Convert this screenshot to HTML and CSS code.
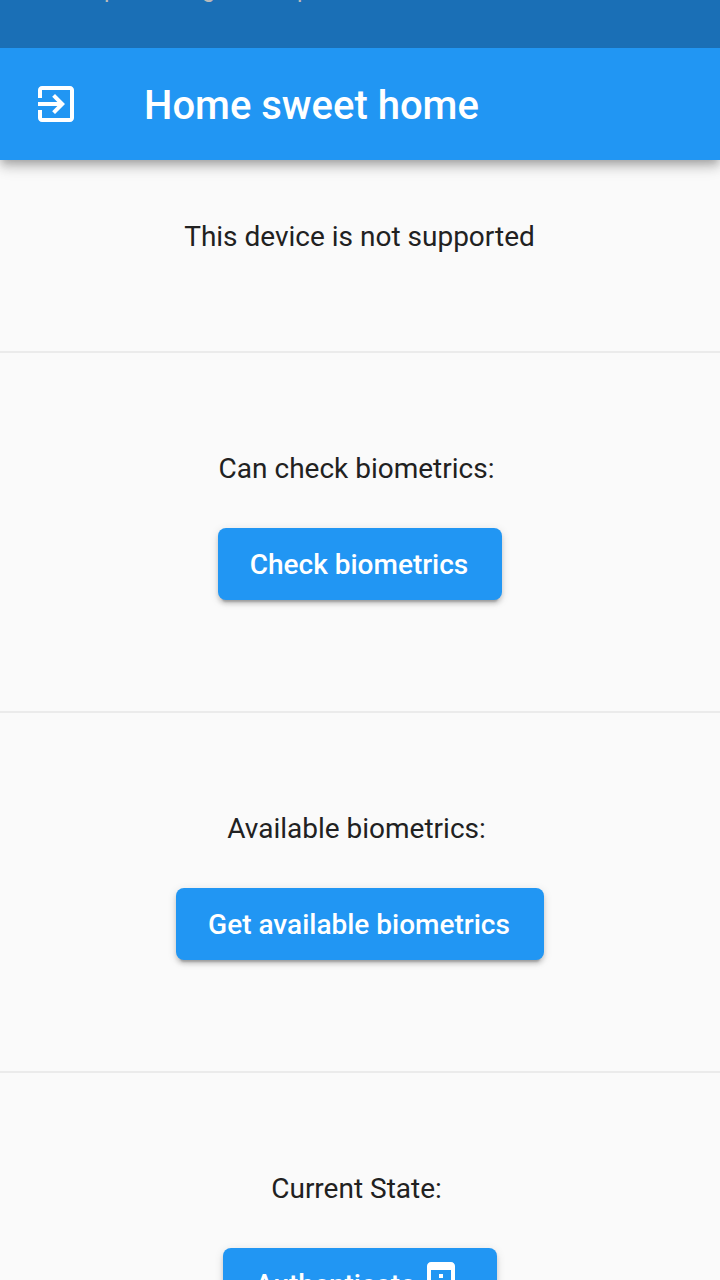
FILE: index.html
```html
<!DOCTYPE html>
<html lang="en">
<head>
<meta charset="utf-8">
<title>Home sweet home</title>
<link rel="stylesheet" href="styles.css">
</head>
<body>
<div class="screen">
  <div class="status"><span class="glyph first">p</span><span class="glyph second">g</span><span class="glyph third">p</span></div>
  <header class="appbar">
    <svg class="icon" viewBox="0 0 24 24"><path d="M10.09 15.59L11.5 17l5-5-5-5-1.41 1.41L12.67 11H3v2h9.67l-2.58 2.59zM19 3H5c-1.11 0-2 .9-2 2v4h2V5h14v14H5v-4H3v4c0 1.1.89 2 2 2h14c1.1 0 2-.9 2-2V5c0-1.1-.9-2-2-2z"/></svg>
    <h1 class="title">Home sweet home</h1>
  </header>
  <main class="content">
    <p class="support">This device is not supported</p>
    <section class="section">
      <p class="label">Can check biometrics: </p>
      <button class="button"><span class="caption">Check biometrics</span></button>
    </section>
    <section class="section">
      <p class="label">Available biometrics: </p>
      <button class="button"><span class="caption">Get available biometrics</span></button>
    </section>
    <section class="section">
      <p class="label">Current State: </p>
      <button class="button"><span class="caption">Authenticate</span><svg class="icon" viewBox="0 0 24 24"><path d="M13 7h-2v2h2V7zm0 4h-2v6h2v-6zm4-9.99L7 1c-1.1 0-2 .9-2 2v18c0 1.1.9 2 2 2h10c1.1 0 2-.9 2-2V3c0-1.1-.9-1.99-2-1.99zM17 19H7V5h10v14z"/></svg></button>
    </section>
  </main>
</div>
</body>
</html>
```
FILE: styles.css
```css
* { box-sizing: border-box; }
body { margin: 0; background: #fafafa; font-family: Roboto, sans-serif; }
.screen { height: 1280px; overflow: hidden; display: flex; flex-direction: column; }
.status {
  position: relative;
  z-index: 2;
  flex: none;
  height: 48px;
  background: #1a6fb6;
  color: #bababa;
  font-size: 24px;
  line-height: 28px;
  overflow: hidden;
  display: flex;
}
.glyph { margin-top: -25px; width: 14px; }
.first { margin-left: 104px; }
.second { margin-left: 84px; }
.third { margin-left: 81px; }
.appbar {
  flex: none;
  height: 112px;
  padding: 0 32px;
  display: flex;
  align-items: center;
  gap: 64px;
  background: #2196f3;
  color: #fff;
  box-shadow: 0 4px 8px -2px rgba(0,0,0,.2), 0 8px 10px rgba(0,0,0,.14), 0 2px 20px rgba(0,0,0,.12);
  z-index: 1;
}
.icon { width: 48px; height: 48px; fill: currentColor; flex: none; }
.title { margin: 4px 0 0; font-size: 40px; line-height: 48px; font-weight: 500; white-space: nowrap; }
.content { flex: none; color: #212121; font-size: 28px; line-height: 32px; }
.support { margin: 0; padding: 61px 1px 0 0; height: 191px; text-align: center; }
.section {
  height: 360px;
  padding-top: 100px;
  border-top: 2px solid #ebebeb;
  display: flex;
  flex-direction: column;
  align-items: center;
}
.label { margin: 0; white-space: pre; }
.button {
  margin-top: 43px;
  height: 72px;
  padding: 0 32px;
  border: 0;
  border-radius: 8px;
  display: flex;
  align-items: center;
  background: #2196f3;
  color: #fff;
  font: 500 28px/32px Roboto, sans-serif;
  white-space: nowrap;
  box-shadow: 0 6px 2px -4px rgba(0,0,0,.2), 0 4px 4px rgba(0,0,0,.14), 0 2px 10px rgba(0,0,0,.12);
}
.caption { padding: 2px 2px 0 0; }
```
